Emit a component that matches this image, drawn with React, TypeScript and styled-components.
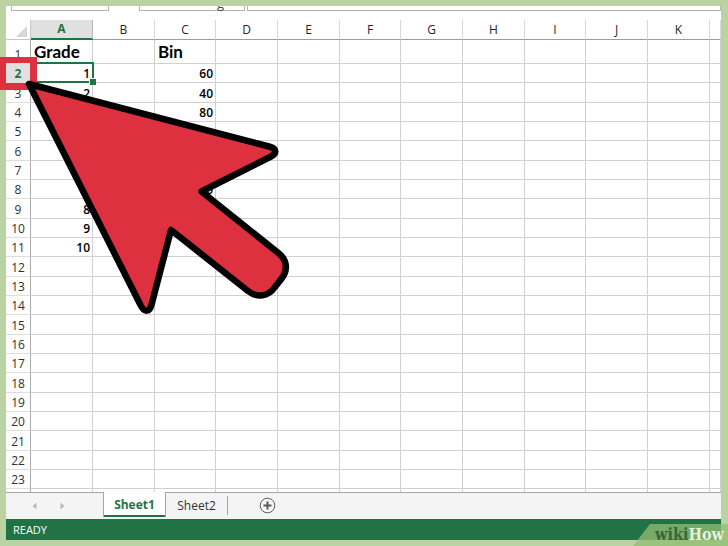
import React from "react";
import styled, { createGlobalStyle, css } from "styled-components";

const ui = `"Open Sans", "Noto Sans", sans-serif`;
const green = "#217346";
const red = "#de3140";

const GlobalStyle = createGlobalStyle`
  * { box-sizing: border-box; }
  body { margin: 0; }
  button { font: inherit; border: 0; background: none; padding: 0; }
`;

const Frame = styled.main`
  position: relative;
  display: flex;
  height: 100vh;
  padding: 6px 7px 6px 6px;
  background: #b9d3a2;
  font-family: ${ui};
  overflow: hidden;
`;

const Workbook = styled.div`
  flex: 1;
  min-width: 0;
  display: flex;
  flex-direction: column;
  background: #fff;
`;

const FormulaStrip = styled.div`
  display: flex;
  flex: none;
  height: 5px;
  margin-bottom: 9px;
  padding-left: 5px;
  overflow: hidden;
`;

const StripBox = styled.div<{ $width?: number; $gap?: number }>`
  display: flex;
  align-items: flex-end;
  justify-content: flex-end;
  width: ${(p) => (p.$width ? `${p.$width}px` : "auto")};
  flex: ${(p) => (p.$width ? "none" : 1)};
  margin-right: ${(p) => p.$gap ?? 0}px;
  padding-right: 20px;
  border: 1px solid #b4b4b4;
  border-top: 0;
  font-size: 13px;
  line-height: 14px;
  color: #444;
`;

const SheetArea = styled.div`
  flex: 1;
  min-height: 0;
  overflow: hidden;
`;

const Grid = styled.table`
  width: 100%;
  table-layout: fixed;
  border-collapse: separate;
  border-spacing: 0;
`;

const Column = styled.col<{ $width?: number }>`
  width: ${(p) => (p.$width ? `${p.$width}px` : "auto")};
`;

const HeaderRow = styled.tr`
  height: 20px;
`;

const Row = styled.tr`
  height: 19px;
  &:nth-child(3n) { height: 20px; }
  &:first-child { height: 24px; }
`;

const ColumnHeader = styled.th<{ $active?: boolean }>`
  height: inherit;
  padding: 0;
  border-right: 1px solid #d9d9d9;
  border-bottom: 1px solid #9c9c9c;
  font-size: 12px;
  line-height: 18px;
  font-weight: 400;
  color: #262626;
  ${(p) =>
    p.$active &&
    css`
      background: #e0e0e0;
      border-right-color: #b5b5b5;
      border-bottom: 2px solid ${green};
      font-weight: 700;
      color: ${green};
    `}
`;

const Corner = styled.th`
  padding: 0 3px 2px 0;
  border-right: 1px solid #c6c6c6;
  border-bottom: 1px solid #c6c6c6;
  line-height: 0;
  text-align: right;
  vertical-align: bottom;
`;

const RowHeader = styled.th<{ $active?: boolean }>`
  height: inherit;
  padding: 0;
  border-right: 1px solid #ababab;
  border-bottom: 1px solid #dedede;
  font-size: 12px;
  line-height: 16px;
  font-weight: 400;
  vertical-align: bottom;
  color: #303030;
  ${(p) =>
    p.$active &&
    css`
      background: #e0e0e0;
      font-weight: 700;
      color: ${green};
    `}
`;

const Cell = styled.td<{ $title?: boolean; $selected?: boolean }>`
  position: relative;
  z-index: ${(p) => (p.$selected ? 1 : 0)};
  height: inherit;
  padding: 0 2px 0 3px;
  border-right: 1px solid #d0d0d0;
  border-bottom: 1px solid #d0d0d0;
  font-family: ${(p) => (p.$title ? `Lato, ${ui}` : ui)};
  font-size: ${(p) => (p.$title ? 17 : 12)}px;
  font-weight: ${(p) => (p.$title ? 700 : 600)};
  line-height: ${(p) => (p.$title ? 22 : 16)}px;
  text-align: ${(p) => (p.$title ? "left" : "right")};
  vertical-align: bottom;
  white-space: nowrap;
  color: #000;
`;

const Selection = styled.span`
  position: absolute;
  inset: -2px -2px -1px 0;
  border: 2px solid ${green};
  &::after {
    content: "";
    position: absolute;
    right: -4px;
    bottom: -4px;
    width: 6px;
    height: 6px;
    border: solid #fff;
    border-width: 1px 0 0 1px;
    background: ${green};
  }
`;

const TabBar = styled.nav`
  display: flex;
  flex: none;
  align-items: flex-start;
  height: 27px;
  border-top: 1px solid #a6a6a6;
  background: #f4f4f4;
  font-size: 12px;
  color: #444;
`;

const Arrows = styled.div`
  display: flex;
  align-items: center;
  gap: 20px;
  width: 97px;
  height: 25px;
  padding-left: 24px;
`;

const IconButton = styled.button`
  display: flex;
  align-items: center;
  justify-content: center;
  width: 8px;
  height: 16px;
`;

const Tab = styled.button<{ $active?: boolean }>`
  width: 61px;
  height: 25px;
  color: #333;
  ${(p) =>
    p.$active &&
    css`
      width: 63px;
      margin-top: -1px;
      border: solid #a6a6a6;
      border-width: 0 1px;
      box-shadow: inset 0 -2px 0 ${green};
      background: #fff;
      font-weight: 700;
      color: ${green};
    `}
`;

const AddButton = styled.button`
  display: flex;
  align-items: center;
  height: 25px;
  margin-left: 31px;
`;

const Divider = styled.span`
  width: 1px;
  height: 19px;
  margin-top: 3px;
  background: #a6a6a6;
`;

const StatusBar = styled.footer`
  flex: none;
  height: 21px;
  padding-left: 7px;
  background: ${green};
  font-size: 11px;
  line-height: 21px;
  color: #fff;
`;

const Overlay = styled.svg`
  position: absolute;
  left: 0;
  top: 0;
  z-index: 2;
  pointer-events: none;
`;

const Watermark = styled.div`
  position: absolute;
  right: 0;
  bottom: 0;
  width: 95px;
  height: 22px;
  padding-right: 4px;
  clip-path: polygon(17px 0, 100% 0, 100% 100%, 0 100%);
  background: rgba(147, 190, 112, 0.75);
  font-family: "DejaVu Serif Condensed", "DejaVu Serif", serif;
  font-size: 16px;
  font-weight: 700;
  line-height: 22px;
  text-align: right;
  color: #39653a;
`;

const How = styled.span`
  color: #e6f0dc;
`;

const letters = ["A", "B", "C", "D", "E", "F", "G", "H", "I", "J", "K"];
const widths = [62, 62, 61, 62, 62, 61, 62, 62, 61, 62, 62];
const columns = [...letters, ""];

const values: Record<string, string> = {
  A1: "Grade",
  C1: "Bin",
  C2: "60",
  C3: "40",
  C4: "80",
  C8: "50",
};
for (let n = 1; n <= 10; n++) values[`A${n + 1}`] = String(n);

const rows = Array.from({ length: 24 }, (_, i) => i + 1);

export default function App() {
  return (
    <>
      <GlobalStyle />
      <Frame>
        <Workbook>
          <FormulaStrip>
            <StripBox $width={98} $gap={30} />
            <StripBox $width={106} $gap={2}>g</StripBox>
            <StripBox />
          </FormulaStrip>
          <SheetArea>
            <Grid>
              <colgroup>
                <Column $width={25} />
                {widths.map((w, i) => (
                  <Column key={i} $width={w} />
                ))}
                <Column />
              </colgroup>
              <thead>
                <HeaderRow>
                  <Corner>
                    <svg width="11" height="11" viewBox="0 0 11 11">
                      <path d="M11 0V11H0Z" fill="#d6d6d6" />
                    </svg>
                  </Corner>
                  {columns.map((c) => (
                    <ColumnHeader key={c} scope="col" $active={c === "A"}>
                      {c}
                    </ColumnHeader>
                  ))}
                </HeaderRow>
              </thead>
              <tbody>
                {rows.map((r) => (
                  <Row key={r}>
                    <RowHeader scope="row" $active={r === 2}>
                      {r < 24 ? r : ""}
                    </RowHeader>
                    {columns.map((c) => {
                      const selected = c === "A" && r === 2;
                      return (
                        <Cell key={c} $title={r === 1} $selected={selected}>
                          {values[`${c}${r}`]}
                          {selected && <Selection />}
                        </Cell>
                      );
                    })}
                  </Row>
                ))}
              </tbody>
            </Grid>
          </SheetArea>
          <TabBar aria-label="Sheets">
            <Arrows>
              <IconButton aria-label="Previous sheet">
                <svg width="5" height="8" viewBox="0 0 5 8">
                  <path d="M4.500 0.500V7.500L0.500 4Z" fill="#b9b9b9" />
                </svg>
              </IconButton>
              <IconButton aria-label="Next sheet">
                <svg width="5" height="8" viewBox="0 0 5 8">
                  <path d="M0.500 0.500V7.500L4.500 4Z" fill="#b9b9b9" />
                </svg>
              </IconButton>
            </Arrows>
            <Tab $active>Sheet1</Tab>
            <Tab>Sheet2</Tab>
            <Divider />
            <AddButton aria-label="New sheet">
              <svg width="17" height="17" viewBox="0 0 17 17" fill="none" stroke="#5a5a5a">
                <circle cx="8.500" cy="8.500" r="7.300" />
                <path d="M8.500 4.500V12.500M4.500 8.500H12.500" strokeWidth="2" />
              </svg>
            </AddButton>
          </TabBar>
          <StatusBar>READY</StatusBar>
        </Workbook>
        <Overlay width="300" height="320" viewBox="0 0 300 320" aria-hidden="true">
          <path d="M0 57H37V90H0ZM6 63V83H30V63Z" fill={red} fillRule="evenodd" />
          <path
            d="M29 84L269 146.500C277 148.500 277 153.500 271 156.500L201.500 191.500L279 253.500C287 260 288 270 282 278L275 287C268 297 257 298 248 291L171 230L152 303C150 313 144 313 140 304Z"
            fill={red}
            stroke="#000"
            strokeWidth="6.500"
            strokeLinejoin="round"
          />
        </Overlay>
        <Watermark>
          wiki<How>How</How>
        </Watermark>
      </Frame>
    </>
  );
}
